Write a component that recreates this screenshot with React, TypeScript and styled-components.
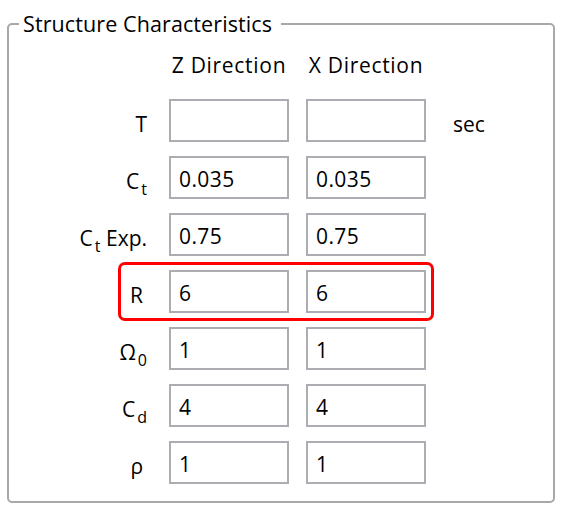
import React from 'react';
import styled, { createGlobalStyle } from 'styled-components';

const GlobalStyle = createGlobalStyle`
  html, body {
    margin: 0;
    padding: 0;
    background: #ffffff;
  }
  body {
    font-family: "Open Sans", "Noto Sans", sans-serif;
    color: #000000;
  }
`;

const Page = styled.div`
  width: 563px;
  height: 513px;
  padding: 11px 0 0 7px;
  box-sizing: border-box;
`;

const Group = styled.fieldset`
  width: 548px;
  height: 492px;
  box-sizing: border-box;
  margin: 0;
  padding: 0 0 0 10px;
  border: 2px solid #a8a8ab;
  border-radius: 5px;
`;

const Legend = styled.legend`
  padding: 0 9px 0 4px;
  font-size: 21.5px;
  line-height: 26px;
  letter-spacing: 0.1px;
`;

const Body = styled.div`
  display: flex;
  flex-direction: column;
  gap: 14px;
  padding-top: 14px;
`;

const Row = styled.div<{ $highlight?: boolean }>`
  position: relative;
  display: flex;
  align-items: center;
  height: 43px;

  &::before {
    content: '';
    display: ${(p) => (p.$highlight ? 'block' : 'none')};
    position: absolute;
    left: 99px;
    width: 316px;
    top: -8px;
    bottom: -8px;
    box-sizing: border-box;
    border: 3px solid #ff0000;
    border-radius: 7px;
    pointer-events: none;
  }
`;

const HeaderRow = styled.div`
  display: flex;
  align-items: center;
  height: 28px;
  margin-bottom: 6px;
`;

const Label = styled.div<{ $pad?: number }>`
  width: 128px;
  box-sizing: border-box;
  padding-right: ${(p) => p.$pad ?? 0}px;
  padding-top: 6px;
  text-align: right;
  font-size: 21px;
  white-space: nowrap;
`;

const Sub = styled.span`
  font-size: 16px;
  position: relative;
  top: 6px;
  margin-left: 2px;
`;

const Heading = styled.div`
  width: 120px;
  text-align: center;
  font-size: 21px;
  letter-spacing: 0.7px;
  white-space: nowrap;

  & + & {
    margin-left: 17px;
  }
`;

const HeadSpacer = styled.div`
  width: 150px;
`;

const Field = styled.input`
  width: 120px;
  height: 43px;
  box-sizing: border-box;
  margin: 0;
  padding: 3px 0 0 8px;
  border: 2px solid #abadb3;
  border-radius: 0;
  background: #ffffff;
  font-family: inherit;
  font-size: 21px;
  letter-spacing: 0.4px;
  color: #000000;
  outline: none;

  &:first-of-type {
    margin-left: 22px;
  }
  & + & {
    margin-left: 17px;
  }
`;

const Unit = styled.div`
  margin-left: 27px;
  padding-top: 7px;
  font-size: 21px;
`;

type Param = {
  label: React.ReactNode;
  z: string;
  x: string;
  unit?: string;
  pad?: number;
  highlight?: boolean;
};

const params: Param[] = [
  { label: 'T', z: '', x: '', unit: 'sec' },
  { label: <>C<Sub>t</Sub></>, z: '0.035', x: '0.035' },
  { label: <>C<Sub>t</Sub> Exp.</>, z: '0.75', x: '0.75' },
  { label: 'R', z: '6', x: '6', pad: 4, highlight: true },
  { label: <>Ω<Sub>0</Sub></>, z: '1', x: '1' },
  { label: <>C<Sub>d</Sub></>, z: '4', x: '4' },
  { label: 'ρ', z: '1', x: '1', pad: 4 },
];

const App: React.FC = () => {
  return (
    <>
      <GlobalStyle />
      <Page>
        <Group>
          <Legend>Structure Characteristics</Legend>
          <Body>
            <HeaderRow>
              <HeadSpacer />
              <Heading>Z Direction</Heading>
              <Heading>X Direction</Heading>
            </HeaderRow>
            {params.map((p, i) => (
              <Row key={i} $highlight={p.highlight}>
                <Label $pad={p.pad}>{p.label}</Label>
                <Field readOnly value={p.z} />
                <Field readOnly value={p.x} />
                {p.unit && <Unit>{p.unit}</Unit>}
              </Row>
            ))}
          </Body>
        </Group>
      </Page>
    </>
  );
};

export default App;
